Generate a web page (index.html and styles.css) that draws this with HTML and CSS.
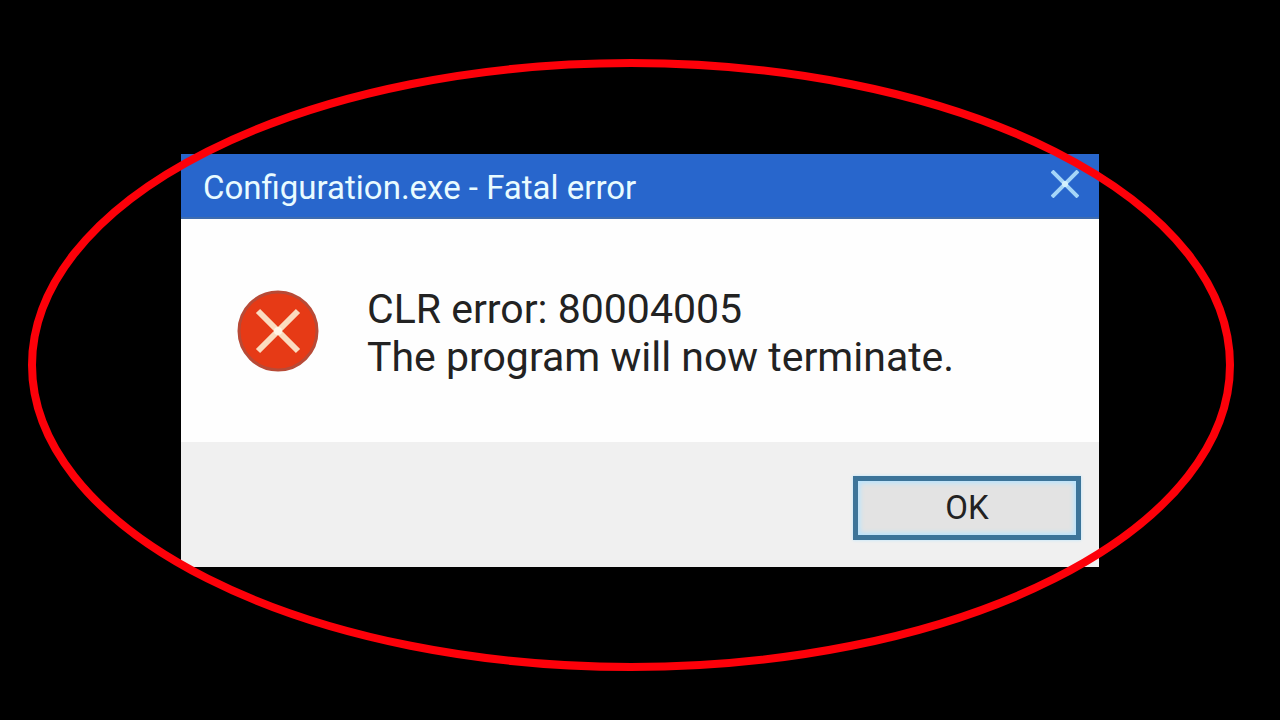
FILE: index.html
```html
<!DOCTYPE html>
<html lang="en">
<head>
  <meta charset="UTF-8">
  <meta name="viewport" content="width=device-width, initial-scale=1.0">
  <title>Configuration.exe - Fatal error</title>
  <link rel="stylesheet" href="styles.css">
</head>
<body>

  <div class="dialog" role="alertdialog" aria-labelledby="dialogTitle" aria-describedby="dialogMessage">
    <div class="title-bar">
      <h1 id="dialogTitle">Configuration.exe - Fatal error</h1>
      <button type="button" class="close-btn" aria-label="Close">
        <svg width="28" height="28" viewBox="0 0 28 28">
          <path d="M1 1 L27 27 M27 1 L1 27" stroke="#a6d6f8" stroke-width="4"/>
          <circle cx="14" cy="14" r="3" fill="#d5f2fc"/>
        </svg>
      </button>
    </div>

    <div class="content">
      <svg class="error-icon" width="82" height="82" viewBox="0 0 82 82">
        <circle cx="41" cy="41" r="39" fill="#e63a16" stroke="#b84a36" stroke-width="3"/>
        <path d="M21 21 L61 61 M61 21 L21 61" stroke="#fbdcc0" stroke-width="6"/>
        <circle cx="41" cy="41" r="4" fill="#fff6e8"/>
      </svg>
      <p id="dialogMessage">CLR error: 80004005<br>The program will now terminate.</p>
    </div>

    <div class="footer">
      <button type="button" class="ok-btn">OK</button>
    </div>
  </div>

  <!-- Red highlight ring around the dialog -->
  <svg class="ring" viewBox="0 0 1280 720" aria-hidden="true">
    <ellipse cx="631" cy="365" rx="599" ry="302" fill="none" stroke="#fd0009" stroke-width="8"/>
  </svg>

</body>
</html>
```

FILE: styles.css
```css
* {
  box-sizing: border-box;
}
body {
  font-family: Roboto, "Liberation Sans", sans-serif;
  background-color: #000;
  color: #222;
  margin: 0;
  min-height: 100vh;
  display: flex;
  align-items: center;
  justify-content: center;
}
.dialog {
  width: 90%;
  max-width: 918px;
  background-color: #fefefe;
}
.title-bar {
  display: flex;
  align-items: center;
  justify-content: space-between;
  padding: 14px 20px 9px 22px;
  background-color: #2866cc;
  border-bottom: 2px solid #3e6cb0;
}
.title-bar h1 {
  margin: 0;
  color: #e9fbff;
  font-size: 33px;
  font-weight: 400;
  line-height: 40px;
}
.close-btn {
  align-self: flex-start;
  padding: 2px 0;
  border: none;
  background: none;
  cursor: pointer;
}
.close-btn svg,
.error-icon {
  display: block;
  flex-shrink: 0;
}
.content {
  display: flex;
  align-items: center;
  gap: 48px;
  padding: 62px 56px 61px;
}
.content p {
  margin: 0;
  padding-top: 4px;
  font-size: 41px;
  line-height: 48px;
}
.footer {
  display: flex;
  justify-content: flex-end;
  padding: 34px 18px 27px;
  background-color: #f0f0f0;
}
.ok-btn {
  width: 228px;
  height: 64px;
  border: 5px solid #3c7499;
  background-color: #e3e3e3;
  box-shadow: 0 0 3px #b5e4ff, inset 0 0 5px 2px #b5e4ff;
  color: #222;
  font-family: inherit;
  font-size: 33px;
  cursor: pointer;
}
.ring {
  position: absolute;
  top: 0;
  left: 0;
  width: 100%;
  height: 100%;
  pointer-events: none;
}
```
